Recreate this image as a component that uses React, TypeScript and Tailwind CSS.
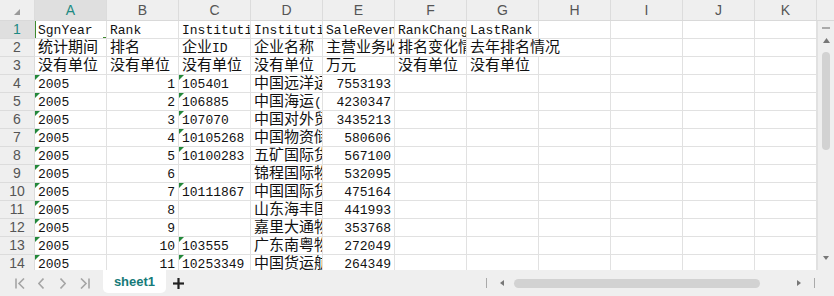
import React from "react";

const COLS = ["A", "B", "C", "D", "E", "F", "G", "H", "I", "J", "K"];

type Cell = { v: string; right?: boolean; flag?: boolean };

const names = [
  "中国远洋运输(集团)总公司",
  "中国海运(集团)总公司",
  "中国对外贸易运输(集团)总公司",
  "中国物资储运总公司",
  "五矿国际货运有限责任公司",
  "锦程国际物流集团",
  "中国国际货运代理有限公司",
  "山东海丰国际航运集团",
  "嘉里大通物流有限公司",
  "广东南粤物流股份有限公司",
  "中国货运航空有限公司"
];
const ids = ["105401", "106885", "107070", "10105268", "10100283", "", "10111867", "", "", "103555", "10253349"];
const revenue = ["7553193", "4230347", "3435213", "580606", "567100", "532095", "475164", "441993", "353768", "272049", "264349"];

const header: Cell[][] = [
  [{ v: "SgnYear" }, { v: "Rank" }, { v: "InstitutionID" }, { v: "InstitutionName" }, { v: "SaleRevenue" }, { v: "RankChange" }, { v: "LastRank" }],
  [{ v: "统计期间" }, { v: "排名" }, { v: "企业ID" }, { v: "企业名称" }, { v: "主营业务收入" }, { v: "排名变化情况" }, { v: "去年排名情况" }],
  [{ v: "没有单位" }, { v: "没有单位" }, { v: "没有单位" }, { v: "没有单位" }, { v: "万元" }, { v: "没有单位" }, { v: "没有单位" }]
];

const body: Cell[][] = names.map((n, i) => [
  { v: "2005", flag: true },
  { v: String(i + 1), right: true },
  { v: ids[i], flag: ids[i] !== "" },
  { v: n },
  { v: revenue[i], right: true }
]);

const rows = [...header, ...body];

function Txt({ s }: { s: string }) {
  const parts = s.split(/([\u2E80-\u9FFF\uFF00-\uFFEF]+)/).filter(Boolean);
  return (
    <span className="whitespace-nowrap leading-none">
      {parts.map((p, i) =>
        /[\u2E80-\u9FFF\uFF00-\uFFEF]/.test(p) ? (
          <span key={i} className="text-[15px]">{p}</span>
        ) : (
          <span key={i} className="text-[13px]">{p}</span>
        )
      )}
    </span>
  );
}

function Flag() {
  return <span className="absolute left-0 top-0 h-0 w-0 border-r-[5px] border-t-[5px] border-r-transparent border-t-[#23883a]" />;
}

export default function App() {
  return (
    <div className="flex h-[296px] w-[834px] flex-col overflow-hidden bg-white">
      <div className="flex h-[270px]">
        <div className="w-[817px] overflow-hidden">
          {/* column headers */}
          <div className="flex h-[21px] border-b border-[#d9d9d9] bg-[#efefef] [font-family:'Liberation_Sans',sans-serif] text-[14px] text-[#555]">
            <div className="relative w-[35px] border-r border-[#dcdcdc]">
              <span className="absolute left-[14px] top-[9px] h-0 w-0 border-b-[6px] border-l-[6px] border-b-[#9a9a9a] border-l-transparent" />
            </div>
            {COLS.map((c, i) => (
              <div
                key={c}
                className={
                  i === 0
                    ? "flex w-[72px] shrink-0 items-center justify-center border-r border-[#dcdcdc] bg-[#dfdfdf] text-[#1d8a82]"
                    : i === 10
                    ? "flex w-[62px] shrink-0 items-center justify-center border-r border-[#dcdcdc]"
                    : "flex w-[72px] shrink-0 items-center justify-center border-r border-[#dcdcdc]"
                }
              >
                {c}
              </div>
            ))}
          </div>

          {/* rows */}
          {Array.from({ length: 14 }).map((_, r) => {
            const data = rows[r] || [];
            return (
              <div key={r} className="flex h-[18px] [font-family:'Liberation_Mono','Noto_Sans_CJK_SC',monospace] text-[#111]">
                <div
                  className={
                    r === 0
                      ? "flex w-[35px] shrink-0 items-center justify-center border-b border-r border-[#dcdcdc] bg-[#dfdfdf] [font-family:'Liberation_Sans',sans-serif] text-[14px] text-[#1d8a82]"
                      : "flex w-[35px] shrink-0 items-center justify-center border-b border-r border-[#dcdcdc] bg-[#efefef] [font-family:'Liberation_Sans',sans-serif] text-[14px] text-[#555]"
                  }
                >
                  {r + 1}
                </div>
                {COLS.map((c, ci) => {
                  const cell = data[ci];
                  const spill = r === 1 && ci === 6;
                  const w = ci === 10 ? "w-[62px]" : "w-[72px]";
                  return (
                    <div
                      key={c}
                      className={`relative flex ${w} shrink-0 items-center border-b border-[#e1e1e1] px-[3px] ${
                        spill ? "overflow-visible" : "overflow-hidden border-r"
                      } ${cell?.right ? "justify-end" : "justify-start"}`}
                    >
                      {cell?.flag && <Flag />}
                      {cell && cell.v && <Txt s={cell.v} />}
                      {r === 0 && ci === 0 && (
                        <>
                          <span className="pointer-events-none absolute -left-px -top-[2px] h-[21px] w-[74px] border-2 border-[#3f8a2e]" />
                          <span className="absolute -right-[2px] bottom-[-4px] h-[6px] w-[6px] border border-white bg-[#3f8a2e]" />
                        </>
                      )}
                    </div>
                  );
                })}
              </div>
            );
          })}
        </div>

        {/* vertical scrollbar */}
        <div className="flex w-[17px] flex-col bg-[#efefef]">
          <div className="h-[21px] border-b border-[#d9d9d9]" />
          <div className="flex flex-1 flex-col items-center border-l border-[#e1e1e1] pt-[6px]">
            <span className="h-[2px] w-[8px] bg-[#aaa]" />
            <svg width="7" height="5" viewBox="0 0 7 5" className="mt-[9px]">
              <polygon points="3.5,0 7,5 0,5" fill="#777" />
            </svg>
            <span className="mt-[9px] h-[98px] w-[8px] rounded-full bg-[#d2d2d2]" />
            <div className="flex-1" />
            <svg width="6" height="4" viewBox="0 0 6 4" className="mb-[10px]">
              <polygon points="0,0 6,0 3,4" fill="#777" />
            </svg>
          </div>
        </div>
      </div>

      {/* sheet tabs */}
      <div className="flex h-[26px] items-start bg-[#efefef] [font-family:'Liberation_Sans',sans-serif]">
        <div className="flex h-[26px] items-center">
          <svg width="10" height="11" viewBox="0 0 10 11" className="ml-[15px]" fill="none" stroke="#a5a5a5" strokeWidth="1.6">
            <line x1="1" y1="0.5" x2="1" y2="10.5" />
            <polyline points="9,0.5 4,5.5 9,10.5" />
          </svg>
          <svg width="6" height="11" viewBox="0 0 6 11" className="ml-[13px]" fill="none" stroke="#a5a5a5" strokeWidth="1.6">
            <polyline points="5.5,0.5 0.8,5.5 5.5,10.5" />
          </svg>
          <svg width="6" height="11" viewBox="0 0 6 11" className="ml-[16px]" fill="none" stroke="#a5a5a5" strokeWidth="1.6">
            <polyline points="0.5,0.5 5.2,5.5 0.5,10.5" />
          </svg>
          <svg width="10" height="11" viewBox="0 0 10 11" className="ml-[14px]" fill="none" stroke="#a5a5a5" strokeWidth="1.6">
            <polyline points="1,0.5 6,5.5 1,10.5" />
            <line x1="9" y1="0.5" x2="9" y2="10.5" />
          </svg>
        </div>
        <div className="ml-[13px] flex h-[23px] w-[63px] items-center justify-center rounded-b-[5px] bg-white text-[13px] font-bold text-[#167a78]">
          sheet1
        </div>
        <svg width="11" height="11" viewBox="0 0 11 11" className="ml-[7px] mt-[8px]" stroke="#222" strokeWidth="2.2">
          <line x1="5.5" y1="0" x2="5.5" y2="11" />
          <line x1="0" y1="5.5" x2="11" y2="5.5" />
        </svg>
        <div className="ml-[302px] flex h-[26px] items-center">
          <span className="h-[10px] w-px bg-[#aaa]" />
          <svg width="4" height="6" viewBox="0 0 4 6" className="ml-[13px]">
            <polygon points="4,0 4,6 0,3" fill="#777" />
          </svg>
          <span className="ml-[10px] h-[9px] w-[246px] rounded-full bg-[#d2d2d2]" />
          <svg width="4" height="6" viewBox="0 0 4 6" className="ml-[37px]">
            <polygon points="0,0 0,6 4,3" fill="#777" />
          </svg>
          <span className="ml-[13px] h-[10px] w-px bg-[#aaa]" />
        </div>
      </div>
    </div>
  );
}
